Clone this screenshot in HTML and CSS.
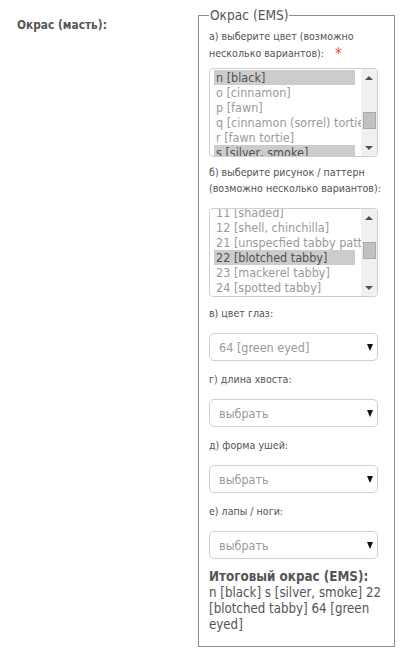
FILE: index.html
```html
<!DOCTYPE html>
<html>
<head>
<meta charset="utf-8">
<link rel="stylesheet" href="styles.css">
</head>
<body>
<div class="row">
  <div class="row-label">Окрас (масть):</div>
  <fieldset class="ems">
    <legend>Окрас (EMS)</legend>
    <div class="field-label lbl-a">а) выберите цвет (возможно<br>несколько вариантов): <span class="req">*</span></div>
    <div class="listbox lb-a">
      <div class="options">
        <div class="opt sel">n [black]</div>
        <div class="opt">o [cinnamon]</div>
        <div class="opt">p [fawn]</div>
        <div class="opt">q [cinnamon (sorrel) tortie]</div>
        <div class="opt">r [fawn tortie]</div>
        <div class="opt sel">s [silver, smoke]</div>
        <div class="opt">t [golden]</div>
      </div>
      <div class="sbar">
        <span class="sbtn"><span class="tri-up"></span></span>
        <span class="track"><span class="thumb" style="margin-top:26px"></span></span>
        <span class="sbtn"><span class="tri-down"></span></span>
      </div>
    </div>
    <div class="field-label lbl-b">б) выберите рисунок / паттерн<br>(возможно несколько вариантов):</div>
    <div class="listbox lb-b">
      <div class="options scrolled">
        <div class="opt">11 [shaded]</div>
        <div class="opt">12 [shell, chinchilla]</div>
        <div class="opt">21 [unspecfied tabby pattern]</div>
        <div class="opt sel">22 [blotched tabby]</div>
        <div class="opt">23 [mackerel tabby]</div>
        <div class="opt">24 [spotted tabby]</div>
        <div class="opt">25 [ticked tabby]</div>
      </div>
      <div class="sbar">
        <span class="sbtn"><span class="tri-up"></span></span>
        <span class="track"><span class="thumb" style="margin-top:16px"></span></span>
        <span class="sbtn"><span class="tri-down"></span></span>
      </div>
    </div>
    <div class="field-label">в) цвет глаз:</div>
    <div class="select"><span>64 [green eyed]</span><span class="caret"></span></div>
    <div class="field-label">г) длина хвоста:</div>
    <div class="select"><span>выбрать</span><span class="caret"></span></div>
    <div class="field-label">д) форма ушей:</div>
    <div class="select"><span>выбрать</span><span class="caret"></span></div>
    <div class="field-label">е) лапы / ноги:</div>
    <div class="select"><span>выбрать</span><span class="caret"></span></div>
    <div class="result">
      <div class="result-title">Итоговый окрас (EMS):</div>
      <div class="result-text">n [black] s [silver, smoke] 22<br>[blotched tabby] 64 [green<br>eyed]</div>
    </div>
  </fieldset>
</div>
</body>
</html>
```
FILE: styles.css
```css
html, body {
  margin: 0;
  padding: 0;
  background: #fff;
}
body {
  font-family: "DejaVu Sans Condensed", "DejaVu Sans", Tahoma, sans-serif;
  color: #555;
}
.row {
  display: flex;
  align-items: flex-start;
}
.row-label {
  width: 181px;
  padding: 18px 0 0 17px;
  font-size: 11.8px;
  font-weight: bold;
  line-height: 14px;
  color: #555;
}
.ems {
  width: 197px;
  box-sizing: border-box;
  margin: 7px 0 0 0;
  padding: 5px 13px 13px 10px;
  border: 1px solid #8c8c8c;
  min-width: 0;
}
.ems legend {
  padding: 0 1px;
  margin-left: 0;
  font-size: 13.6px;
  line-height: 16px;
  color: #555;
}
.field-label {
  font-size: 10.6px;
  line-height: 16px;
  color: #555;
  white-space: nowrap;
  margin-bottom: 12px;
}
.lbl-a {
  margin-bottom: 7px;
}
.lbl-b {
  margin-top: 7px;
  margin-bottom: 12px;
}
.req {
  color: #e5543e;
  font-size: 15px;
  margin-left: 8px;
  position: relative;
  top: 2px;
}
.listbox {
  display: flex;
  width: 169px;
  height: 89px;
  box-sizing: border-box;
  border: 1px solid #cfcfcf;
  border-radius: 4px;
  overflow: hidden;
  background: #fff;
}
.options {
  flex: 1;
  min-width: 0;
  overflow: hidden;
  padding: 1px 0 0 4px;
}
.options.scrolled .opt:first-child {
  margin-top: -5px;
}
.opt {
  height: 15px;
  line-height: 15px;
  font-size: 12.5px;
  padding-left: 2px;
  margin-right: 6px;
  white-space: nowrap;
  color: #9a9a9a;
}
.opt.sel {
  background: #cccccc;
  color: #505050;
}
.sbar {
  width: 16px;
  flex: none;
  background: #f0f0f0;
  display: flex;
  flex-direction: column;
}
.sbtn {
  height: 17px;
  display: flex;
  align-items: center;
  justify-content: center;
  flex: none;
}
.track {
  flex: 1;
  display: flex;
  flex-direction: column;
  align-items: center;
}
.thumb {
  width: 13px;
  height: 17px;
  box-sizing: border-box;
  background: #c1c1c1;
  border: 1px solid #a8a8a8;
}
.tri-up {
  width: 0;
  height: 0;
  border-left: 4px solid transparent;
  border-right: 4px solid transparent;
  border-bottom: 4px solid #505050;
}
.tri-down {
  width: 0;
  height: 0;
  border-left: 4px solid transparent;
  border-right: 4px solid transparent;
  border-top: 4px solid #505050;
}
.lb-b {
  margin-bottom: 8px;
}
.select {
  display: flex;
  align-items: center;
  justify-content: space-between;
  width: 169px;
  height: 28px;
  box-sizing: border-box;
  border: 1px solid #d0d0d0;
  border-radius: 5px;
  padding: 0 4px 0 9px;
  margin-bottom: 10px;
  font-size: 12.5px;
  color: #9a9a9a;
  background: #fff;
}
.caret {
  width: 0;
  height: 0;
  border-left: 3.5px solid transparent;
  border-right: 3.5px solid transparent;
  border-top: 7px solid #111;
}
.result-title {
  font-size: 13.3px;
  font-weight: bold;
  line-height: 16px;
  color: #555;
}
.result-text {
  font-size: 13.2px;
  line-height: 16px;
  color: #555;
  white-space: nowrap;
}
```
